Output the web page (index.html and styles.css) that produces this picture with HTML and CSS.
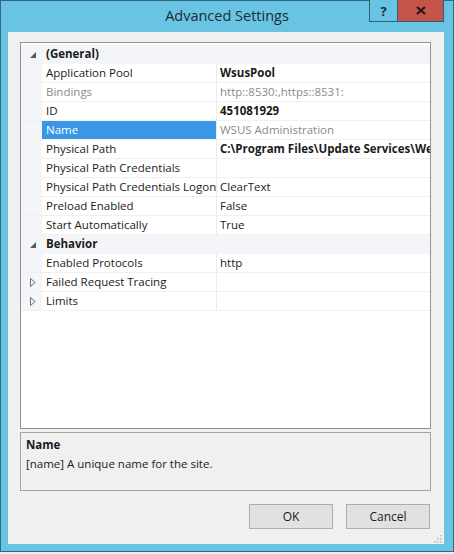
FILE: index.html
```html
<!DOCTYPE html>
<html>
<head>
<meta charset="utf-8">
<link rel="stylesheet" href="styles.css">
</head>
<body>
<div class="window">
  <div class="titlebar">
    <div class="tb-spacer"></div>
    <div class="title">Advanced Settings</div>
    <div class="caption-btns">
      <div class="cbtn help">?</div>
      <div class="cbtn close">
        <svg width="10" height="9" viewBox="0 0 10 9"><path d="M1 1 L9 8 M9 1 L1 8" stroke="#1a1a1a" stroke-width="2.2" fill="none"/></svg>
      </div>
    </div>
  </div>
  <div class="client">
    <div class="grid">
      <div class="row cat">
        <span class="gutter"><svg class="exp" width="6" height="6" viewBox="0 0 6 6"><polygon points="6,0 6,6 0,6" fill="#5a5a5a"/></svg></span>
        <span class="label">(General)</span>
      </div>
      <div class="row"><span class="gutter"></span><span class="label">Application Pool</span><span class="value bold">WsusPool</span></div>
      <div class="row"><span class="gutter"></span><span class="label gray">Bindings</span><span class="value gray">http::8530:,https::8531:</span></div>
      <div class="row"><span class="gutter"></span><span class="label">ID</span><span class="value bold">451081929</span></div>
      <div class="row"><span class="gutter"></span><span class="label selected">Name</span><span class="value gray">WSUS Administration</span></div>
      <div class="row"><span class="gutter"></span><span class="label">Physical Path</span><span class="value bold">C:\Program Files\Update Services\WebServices\Root</span></div>
      <div class="row"><span class="gutter"></span><span class="label">Physical Path Credentials</span><span class="value"></span></div>
      <div class="row"><span class="gutter"></span><span class="label">Physical Path Credentials Logon</span><span class="value">ClearText</span></div>
      <div class="row"><span class="gutter"></span><span class="label">Preload Enabled</span><span class="value">False</span></div>
      <div class="row"><span class="gutter"></span><span class="label">Start Automatically</span><span class="value">True</span></div>
      <div class="row cat">
        <span class="gutter"><svg class="exp" width="6" height="6" viewBox="0 0 6 6"><polygon points="6,0 6,6 0,6" fill="#5a5a5a"/></svg></span>
        <span class="label">Behavior</span>
      </div>
      <div class="row"><span class="gutter"></span><span class="label">Enabled Protocols</span><span class="value">http</span></div>
      <div class="row">
        <span class="gutter"><svg class="col" width="6" height="9" viewBox="0 0 6 9"><polygon points="0.5,0.5 5.2,4.5 0.5,8.5" fill="none" stroke="#6e6e6e" stroke-width="1"/></svg></span>
        <span class="label">Failed Request Tracing</span><span class="value"></span>
      </div>
      <div class="row">
        <span class="gutter"><svg class="col" width="6" height="9" viewBox="0 0 6 9"><polygon points="0.5,0.5 5.2,4.5 0.5,8.5" fill="none" stroke="#6e6e6e" stroke-width="1"/></svg></span>
        <span class="label">Limits</span><span class="value"></span>
      </div>
    </div>
    <div class="desc">
      <div class="desc-title">Name</div>
      <div class="desc-text">[name] A unique name for the site.</div>
    </div>
    <div class="buttons">
      <div class="btn">OK</div>
      <div class="btn">Cancel</div>
    </div>
    <div class="grip-row">
      <svg width="9" height="9" viewBox="0 0 9 9">
        <rect x="7" y="1" width="1.5" height="1.5" fill="#b8b8b8"/>
        <rect x="4" y="4" width="1.5" height="1.5" fill="#b8b8b8"/>
        <rect x="7" y="4" width="1.5" height="1.5" fill="#b8b8b8"/>
        <rect x="1" y="7" width="1.5" height="1.5" fill="#b8b8b8"/>
        <rect x="4" y="7" width="1.5" height="1.5" fill="#b8b8b8"/>
        <rect x="7" y="7" width="1.5" height="1.5" fill="#b8b8b8"/>
      </svg>
    </div>
  </div>
</div>
</body>
</html>
```
FILE: styles.css
```css
* { box-sizing: border-box; }
html, body { margin: 0; padding: 0; }
body {
  background: #e9eef0;
  font-family: "Open Sans", "Noto Sans", "Liberation Sans", sans-serif;
  color: #1b1b1b;
  width: 454px;
  height: 554px;
}
.window {
  width: 454px;
  height: 552px;
  background: #69c4e4;
  border: 1px solid #2f6a82;
  display: flex;
  flex-direction: column;
}
.titlebar {
  height: 31px;
  flex: none;
  display: grid;
  grid-template-columns: 1fr auto 1fr;
}
.title {
  font-size: 14.5px;
  color: #1c2c34;
  padding-top: 5px;
  letter-spacing: 0;
}
.caption-btns {
  justify-self: end;
  align-self: start;
  display: flex;
  margin-right: 9px;
  margin-top: -1px;
  border: 1px solid #2f5f73;
  border-top: none;
  height: 22px;
}
.cbtn {
  height: 21px;
  display: flex;
  align-items: center;
  justify-content: center;
}
.help {
  width: 28px;
  font-weight: 700;
  font-size: 13px;
  color: #1e2e36;
  border-right: 1px solid #2f5f73;
  background: #69c4e4;
}
.close {
  width: 45px;
  background: #c7544b;
}
.client {
  flex: 1;
  margin: 0 9px 7px 7px;
  background: #f0f0f0;
  padding: 10px 13px 0 12px;
  display: flex;
  flex-direction: column;
  font-size: 11.5px;
}
.grid {
  height: 387px;
  border: 1px solid #8e9399;
  background: #ffffff;
  padding-top: 2px;
  flex: none;
}
.row {
  display: grid;
  grid-template-columns: 21px 175px 1fr;
  height: 19px;
  border-bottom: 1px solid #f0f0f0;
  line-height: 18px;
  white-space: nowrap;
  overflow: hidden;
}
.gutter {
  background: #f3f5f8;
  display: flex;
  align-items: center;
  padding-left: 9px;
}
.label {
  padding-left: 4px;
  border-right: 1px solid #ebebeb;
  overflow: hidden;
}
.value {
  padding-left: 3px;
  overflow: hidden;
}
.cat {
  background: #f3f5f8;
  border-bottom-color: #f3f5f8;
}
.cat .label {
  grid-column: 2 / 4;
  font-weight: 700;
  border-right: none;
}
.exp { margin-top: 1px; }
.col { margin-left: 0; }
.bold { font-weight: 700; }
.gray { color: #8a8a8a; }
.selected {
  background: #3a96e6;
  color: #ffffff;
}
.desc {
  margin-top: 3px;
  height: 59px;
  border: 1px solid #a3a3a3;
  padding: 2px 5px 0;
  line-height: 19px;
  flex: none;
}
.desc-title { font-weight: 700; }
.buttons {
  margin-top: 13px;
  display: flex;
  justify-content: flex-end;
  gap: 13px;
  padding-right: 1px;
}
.btn {
  width: 84px;
  height: 25px;
  background: #e1e1e1;
  border: 1px solid #adadad;
  display: flex;
  align-items: center;
  justify-content: center;
  font-size: 12px;
}
.grip-row {
  display: flex;
  justify-content: flex-end;
  margin-top: 5px;
  margin-right: -11px;
}
```
